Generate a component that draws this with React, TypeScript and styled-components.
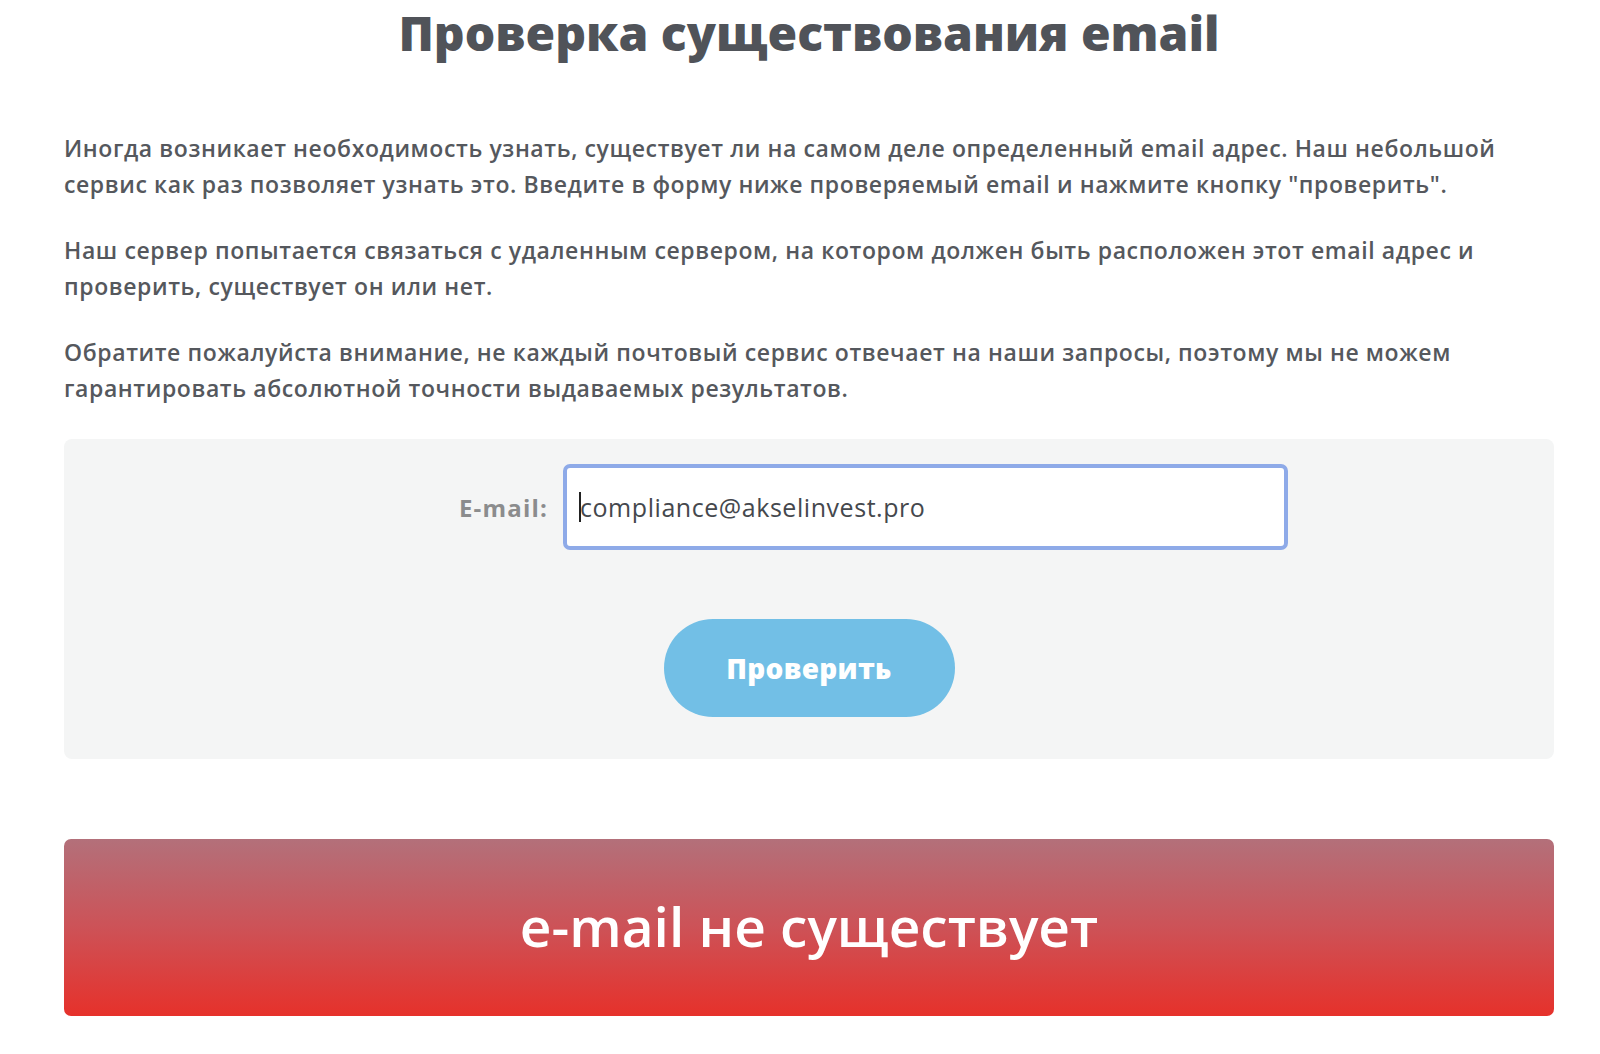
import { useEffect, useRef } from 'react';
import styled, { createGlobalStyle } from 'styled-components';

const GlobalStyle = createGlobalStyle`
    html, body {
        margin: 0;
        padding: 0;
        background: #ffffff;
    }
    body {
        font-family: 'Open Sans', 'Noto Sans', sans-serif;
        color: #505359;
    }
`;

const EmailCheckPage = () => {
    const inputRef = useRef<HTMLInputElement>(null);

    useEffect(() => {
        const input = inputRef.current;
        if (input) {
            input.focus();
            input.setSelectionRange(0, 0);
        }
    }, []);

    return (
        <Page>
            <GlobalStyle />
            <Title>Проверка существования email</Title>
            <Intro>
                <Paragraph>
                    Иногда возникает необходимость узнать, существует ли на самом деле определенный email адрес. Наш небольшой
                    сервис как раз позволяет узнать это. Введите в форму ниже проверяемый email и нажмите кнопку "проверить".
                </Paragraph>
                <Paragraph>
                    Наш сервер попытается связаться с удаленным сервером, на котором должен быть расположен этот email адрес и
                    проверить, существует он или нет.
                </Paragraph>
                <Paragraph>
                    Обратите пожалуйста внимание, не каждый почтовый сервис отвечает на наши запросы, поэтому мы не можем
                    гарантировать абсолютной точности выдаваемых результатов.
                </Paragraph>
            </Intro>
            <Panel>
                <FormRow>
                    <Label htmlFor='email'>E-mail:</Label>
                    <Field>
                        <EmailInput
                            id='email'
                            ref={inputRef}
                            defaultValue='compliance@akselinvest.pro'
                        />
                        <Caret />
                    </Field>
                </FormRow>
                <CheckButton type='button'>Проверить</CheckButton>
            </Panel>
            <Result>e-mail не существует</Result>
        </Page>
    );
};

export default EmailCheckPage;

const Page = styled.div`
    box-sizing: border-box;
    width: 100%;
    padding: 0 46px 40px 64px;
`;

const Title = styled.h1`
    margin: 0;
    text-align: center;
    font-family: 'Open Sans', 'Noto Sans', sans-serif;
    font-size: 48px;
    font-weight: 800;
    line-height: 66px;
    color: #505359;
`;

const Intro = styled.div`
    margin-top: 64px;
`;

const Paragraph = styled.p`
    margin: 0 0 30px;
    font-family: 'Open Sans', 'Noto Sans', sans-serif;
    font-size: 23px;
    font-weight: 600;
    letter-spacing: 0.6px;
    line-height: 36px;
    color: #55585d;
    &:last-child {
        margin-bottom: 0;
    }
`;

const Panel = styled.div`
    margin-top: 33px;
    padding: 25px 0 42px;
    border-radius: 8px;
    background: #f4f5f5;
    display: flex;
    flex-direction: column;
    align-items: center;
    gap: 69px;
`;

const FormRow = styled.div`
    width: 100%;
    display: grid;
    grid-template-columns: 484px 725px;
    column-gap: 15px;
    align-items: center;
`;

const Label = styled.label`
    text-align: right;
    font-family: 'Open Sans', 'Noto Sans', sans-serif;
    font-size: 24px;
    font-weight: 700;
    letter-spacing: 1.2px;
    color: #8b8c8d;
`;

const Field = styled.div`
    position: relative;
    width: 725px;
    height: 86px;
`;

const EmailInput = styled.input`
    box-sizing: border-box;
    width: 100%;
    height: 100%;
    padding: 0 12px 0 13px;
    border: 4px solid #8eaae8;
    border-radius: 7px;
    background: #ffffff;
    outline: none;
    font-family: 'Open Sans', 'Noto Sans', sans-serif;
    font-size: 25px;
    font-weight: 500;
    letter-spacing: 0.55px;
    color: #45484d;
    caret-color: transparent;
`;

const Caret = styled.span`
    position: absolute;
    left: 16px;
    top: 28px;
    width: 1.5px;
    height: 30px;
    background: #222;
    pointer-events: none;
`;

const CheckButton = styled.button`
    width: 291px;
    height: 98px;
    border: none;
    border-radius: 49px;
    background: #72bfe6;
    color: #ffffff;
    font-family: 'Open Sans', 'Noto Sans', sans-serif;
    font-size: 28px;
    font-weight: 800;
    letter-spacing: 0.3px;
    cursor: pointer;
`;

const Result = styled.div`
    margin-top: 80px;
    height: 177px;
    border-radius: 7px;
    background: linear-gradient(180deg, #b3707a 0%, #cd5257 50%, #e6312b 100%);
    display: flex;
    align-items: center;
    justify-content: center;
    padding-bottom: 4px;
    box-sizing: border-box;
    font-family: 'Open Sans', 'Noto Sans', sans-serif;
    font-size: 55px;
    font-weight: 600;
    color: #ffffff;
`;
